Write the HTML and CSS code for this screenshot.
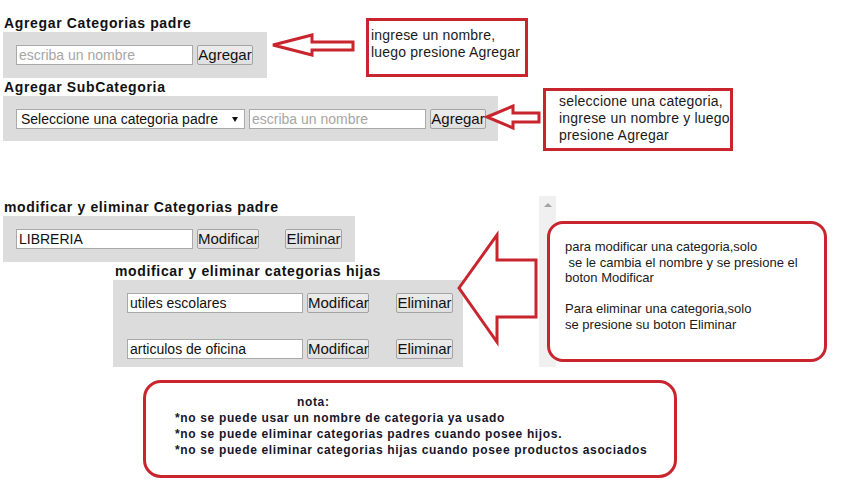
FILE: index.html
```html
<!DOCTYPE html>
<html lang="es">
<head>
<meta charset="utf-8">
<title>Categorias</title>
<link rel="stylesheet" href="styles.css">
</head>
<body>
<main class="page">
  <h2 class="title">Agregar Categorias padre</h2>
  <div class="panel p1">
    <input class="field" type="text" placeholder="escriba un nombre">
    <button class="btn b-agregar" type="button">Agregar</button>
  </div>

  <h2 class="title">Agregar SubCategoria</h2>
  <div class="panel p2">
    <span class="select-wrap">
      <select class="select"><option>Seleccione una categoria padre</option></select>
    </span>
    <input class="field" type="text" placeholder="escriba un nombre">
    <button class="btn b-agregar" type="button">Agregar</button>
  </div>

  <h2 class="title t3">modificar y eliminar Categorias padre</h2>
  <div class="panel p3">
    <input class="field" type="text" value="LIBRERIA">
    <button class="btn b-mod" type="button">Modificar</button>
    <button class="btn b-del" type="button">Eliminar</button>
  </div>

  <h2 class="title t4">modificar y eliminar categorias hijas</h2>
  <div class="panel p4">
    <div class="row">
      <input class="field" type="text" value="utiles escolares">
      <button class="btn b-mod" type="button">Modificar</button>
      <button class="btn b-del" type="button">Eliminar</button>
    </div>
    <div class="row">
      <input class="field" type="text" value="articulos de oficina">
      <button class="btn b-mod" type="button">Modificar</button>
      <button class="btn b-del" type="button">Eliminar</button>
    </div>
  </div>
</main>

<div class="scroll"><span class="scroll-up"></span></div>

<svg class="arrows" width="859" height="492" viewBox="0 0 859 492" xmlns="http://www.w3.org/2000/svg">
  <polygon points="273,45 312,35 312,42 353,42 353,50 312,50 312,55" />
  <polygon points="487,117 513,106 513,113 539,113 539,122 513,122 513,128" />
  <polygon points="459,288 497,235 497,260 536,260 536,317 497,317 497,342" />
</svg>

<div class="callout c1">ingrese un nombre,<br>luego presione Agregar</div>
<div class="callout c2">seleccione una categoria,<br>ingrese un nombre y luego<br>presione Agregar</div>
<div class="callout c3">para modificar una categoria,solo<br>&nbsp;se le cambia el nombre y se presione el<br>boton Modificar<br><br>Para eliminar una categoria,solo<br>se presione su boton Eliminar</div>
<div class="callout c4"><span class="nota">nota:</span><br>*no se puede usar un nombre de categoria ya usado<br>*no se puede eliminar categorias padres cuando posee hijos.<br>*no se puede eliminar categorias hijas cuando posee productos asociados</div>
</body>
</html>
```

FILE: styles.css
```css
html, body {
  margin: 0;
  padding: 0;
  background: #ffffff;
  font-family: "Liberation Sans", Arial, sans-serif;
  color: #111111;
}

.page {
  padding: 14px 0 0 3px;
}

.title {
  margin: 0;
  padding-left: 1px;
  font-size: 14px;
  line-height: 18px;
  font-weight: bold;
  letter-spacing: 0.65px;
  color: #111111;
}

.t3 { margin-top: 57px; }
.t4 { margin-left: 111px; }

.panel {
  display: flex;
  align-items: center;
  width: fit-content;
  background: #dcdcdc;
  padding: 13px;
  gap: 4px;
}

.p1 { padding-right: 14px; }
.p2 { padding: 13px 12px 12px 13px; }
.p4 {
  margin-left: 110px;
  flex-direction: column;
  align-items: flex-start;
  gap: 26px;
  padding: 13px 10px 8px 14px;
}

.row {
  display: flex;
  align-items: center;
  gap: 4px;
}

.field {
  box-sizing: border-box;
  width: 177px;
  height: 20px;
  margin: 0;
  padding: 0 2px;
  border: 1px solid #a9a9a9;
  background: #ffffff;
  font-family: "Liberation Sans", Arial, sans-serif;
  font-size: 14px;
  color: #111111;
  outline: none;
}
.p4 .field { width: 176px; }

.field::placeholder { color: #a6a6a6; }

.btn {
  box-sizing: border-box;
  height: 20px;
  margin: 0;
  padding: 0;
  border: 1px solid #a3a3a3;
  border-radius: 2px;
  background: linear-gradient(#ececec, #e0e0e0);
  font-family: "Liberation Sans", Arial, sans-serif;
  font-size: 15px;
  line-height: 18px;
  color: #111111;
  white-space: nowrap;
}
.b-agregar { width: 56px; }
.b-mod { width: 62px; }
.b-del { width: 57px; margin-left: 22px; }
.p4 .b-del { margin-left: 23px; }

.select-wrap {
  position: relative;
  display: block;
}
.select-wrap::after {
  content: "";
  position: absolute;
  right: 7px;
  top: 8px;
  border-left: 3px solid transparent;
  border-right: 3px solid transparent;
  border-top: 5px solid #111111;
  pointer-events: none;
}
.select {
  display: block;
  box-sizing: border-box;
  width: 229px;
  height: 20px;
  margin: 0;
  padding: 0 0 0 4px;
  border: 1px solid #a9a9a9;
  border-radius: 0;
  background: #ffffff;
  appearance: none;
  -webkit-appearance: none;
  font-family: "Liberation Sans", Arial, sans-serif;
  font-size: 14px;
  color: #111111;
}

.scroll {
  position: absolute;
  left: 539px;
  top: 196px;
  width: 17px;
  height: 171px;
  background: #f0f0f0;
}
.scroll-up {
  position: absolute;
  left: 5px;
  top: 7px;
  border-left: 4px solid transparent;
  border-right: 4px solid transparent;
  border-bottom: 4px solid #a3a3a3;
}

.arrows {
  position: absolute;
  left: 0;
  top: 0;
  pointer-events: none;
}
.arrows polygon {
  fill: #ffffff;
  stroke: #c9252f;
  stroke-width: 3;
  stroke-linejoin: miter;
}

.callout {
  position: absolute;
  box-sizing: border-box;
  border: 3px solid #c9252f;
  background: #ffffff;
  color: #1a1a1a;
  white-space: nowrap;
}
.c1 {
  left: 366px;
  top: 18px;
  width: 162px;
  height: 59px;
  padding: 6px 0 0 2px;
  font-size: 14px;
  line-height: 17px;
  letter-spacing: 0.2px;
}
.c2 {
  left: 543px;
  top: 88px;
  width: 190px;
  height: 63px;
  padding: 2px 0 0 13px;
  font-size: 14px;
  line-height: 17px;
  letter-spacing: 0.2px;
}
.c3 {
  left: 547px;
  top: 221px;
  width: 280px;
  height: 141px;
  border-radius: 16px;
  padding: 15px 0 0 15px;
  font-size: 13px;
  line-height: 15.6px;
}
.c4 {
  left: 143px;
  top: 380px;
  width: 534px;
  height: 98px;
  border-radius: 18px;
  padding: 11px 0 0 29px;
  font-size: 12px;
  line-height: 16px;
  font-weight: bold;
  letter-spacing: 0.65px;
  color: #16162a;
}
.nota { margin-left: 122px; }
```
